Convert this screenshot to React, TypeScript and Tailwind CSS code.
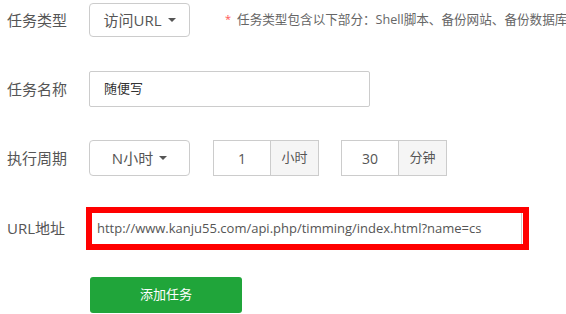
import React from 'react';

const font = { fontFamily: '"Open Sans", "Noto Sans CJK SC", sans-serif' };

function Caret() {
  return <span className="ml-[6px] inline-block w-0 h-0 border-l-[4px] border-r-[4px] border-t-[4px] border-l-transparent border-r-transparent border-t-[#555]" />;
}

function Select({ label }: { label: string }) {
  return (
    <div className="w-[101px] h-full border border-[#ccc] rounded-[4px] flex items-center justify-center text-[15px] text-[#555]">
      {label}
      <Caret />
    </div>
  );
}

function AddonInput({ value, unit }: { value: string; unit: string }) {
  return (
    <div className="flex h-full">
      <div className="w-[58px] h-full border border-[#ccc] flex items-center justify-center text-[14px] text-[#555]">
        {value}
      </div>
      <div className="w-[48px] h-full border border-l-0 border-[#ccc] bg-[#f5f5f5] flex items-center justify-center text-[13px] text-[#555]">
        {unit}
      </div>
    </div>
  );
}

function Row({ label, className, children }: { label: string; className: string; children: React.ReactNode }) {
  return (
    <div className={`flex items-center ${className}`}>
      <div className="w-[89px] pl-[7px] text-[15px] text-[#555] shrink-0">{label}</div>
      <div className="flex items-center h-full">{children}</div>
    </div>
  );
}

export default function App() {
  return (
    <div className="w-[566px] h-[314px] overflow-hidden bg-white pt-[3px]" style={font}>
      <Row label="任务类型" className="h-[34px]">
        <Select label="访问URL" />
        <span className="ml-[35px] text-[11px] text-[#f55] leading-none -mt-[4px]">*</span>
        <span className="ml-[6px] text-[12.6px] text-[#666] whitespace-nowrap">
          任务类型包含以下部分：Shell脚本、备份网站、备份数据库
        </span>
      </Row>

      <Row label="任务名称" className="h-[36px] mt-[34px]">
        <div className="w-[281px] h-full border border-[#ccc] rounded-[2px] flex items-center pl-[14px] text-[13px] text-[#333]">
          随便写
        </div>
      </Row>

      <Row label="执行周期" className="h-[36px] mt-[33px]">
        <Select label="N小时" />
        <div className="ml-[23px] h-full">
          <AddonInput value="1" unit="小时" />
        </div>
        <div className="ml-[22px] h-full">
          <AddonInput value="30" unit="分钟" />
        </div>
      </Row>

      <div className="flex items-center h-[43px] mt-[31px]">
        <div className="w-[86px] pl-[7px] text-[15px] text-[#555] shrink-0">URL地址</div>
        <div className="w-[443px] h-full border-[6px] border-[#f00] flex">
          <div className="flex-1 h-full border-r border-[#ccc] flex items-center pl-[5px] text-[13px] text-[#555] whitespace-nowrap">
            http://www.kanju55.com/api.php/timming/index.html?name=cs
          </div>
          <div className="w-[1px]" />
        </div>
      </div>

      <div className="mt-[27px] ml-[90px] w-[152px] h-[36px] rounded-[3px] bg-[#20a53a] flex items-center justify-center text-[13px] text-white">
        添加任务
      </div>
    </div>
  );
}
